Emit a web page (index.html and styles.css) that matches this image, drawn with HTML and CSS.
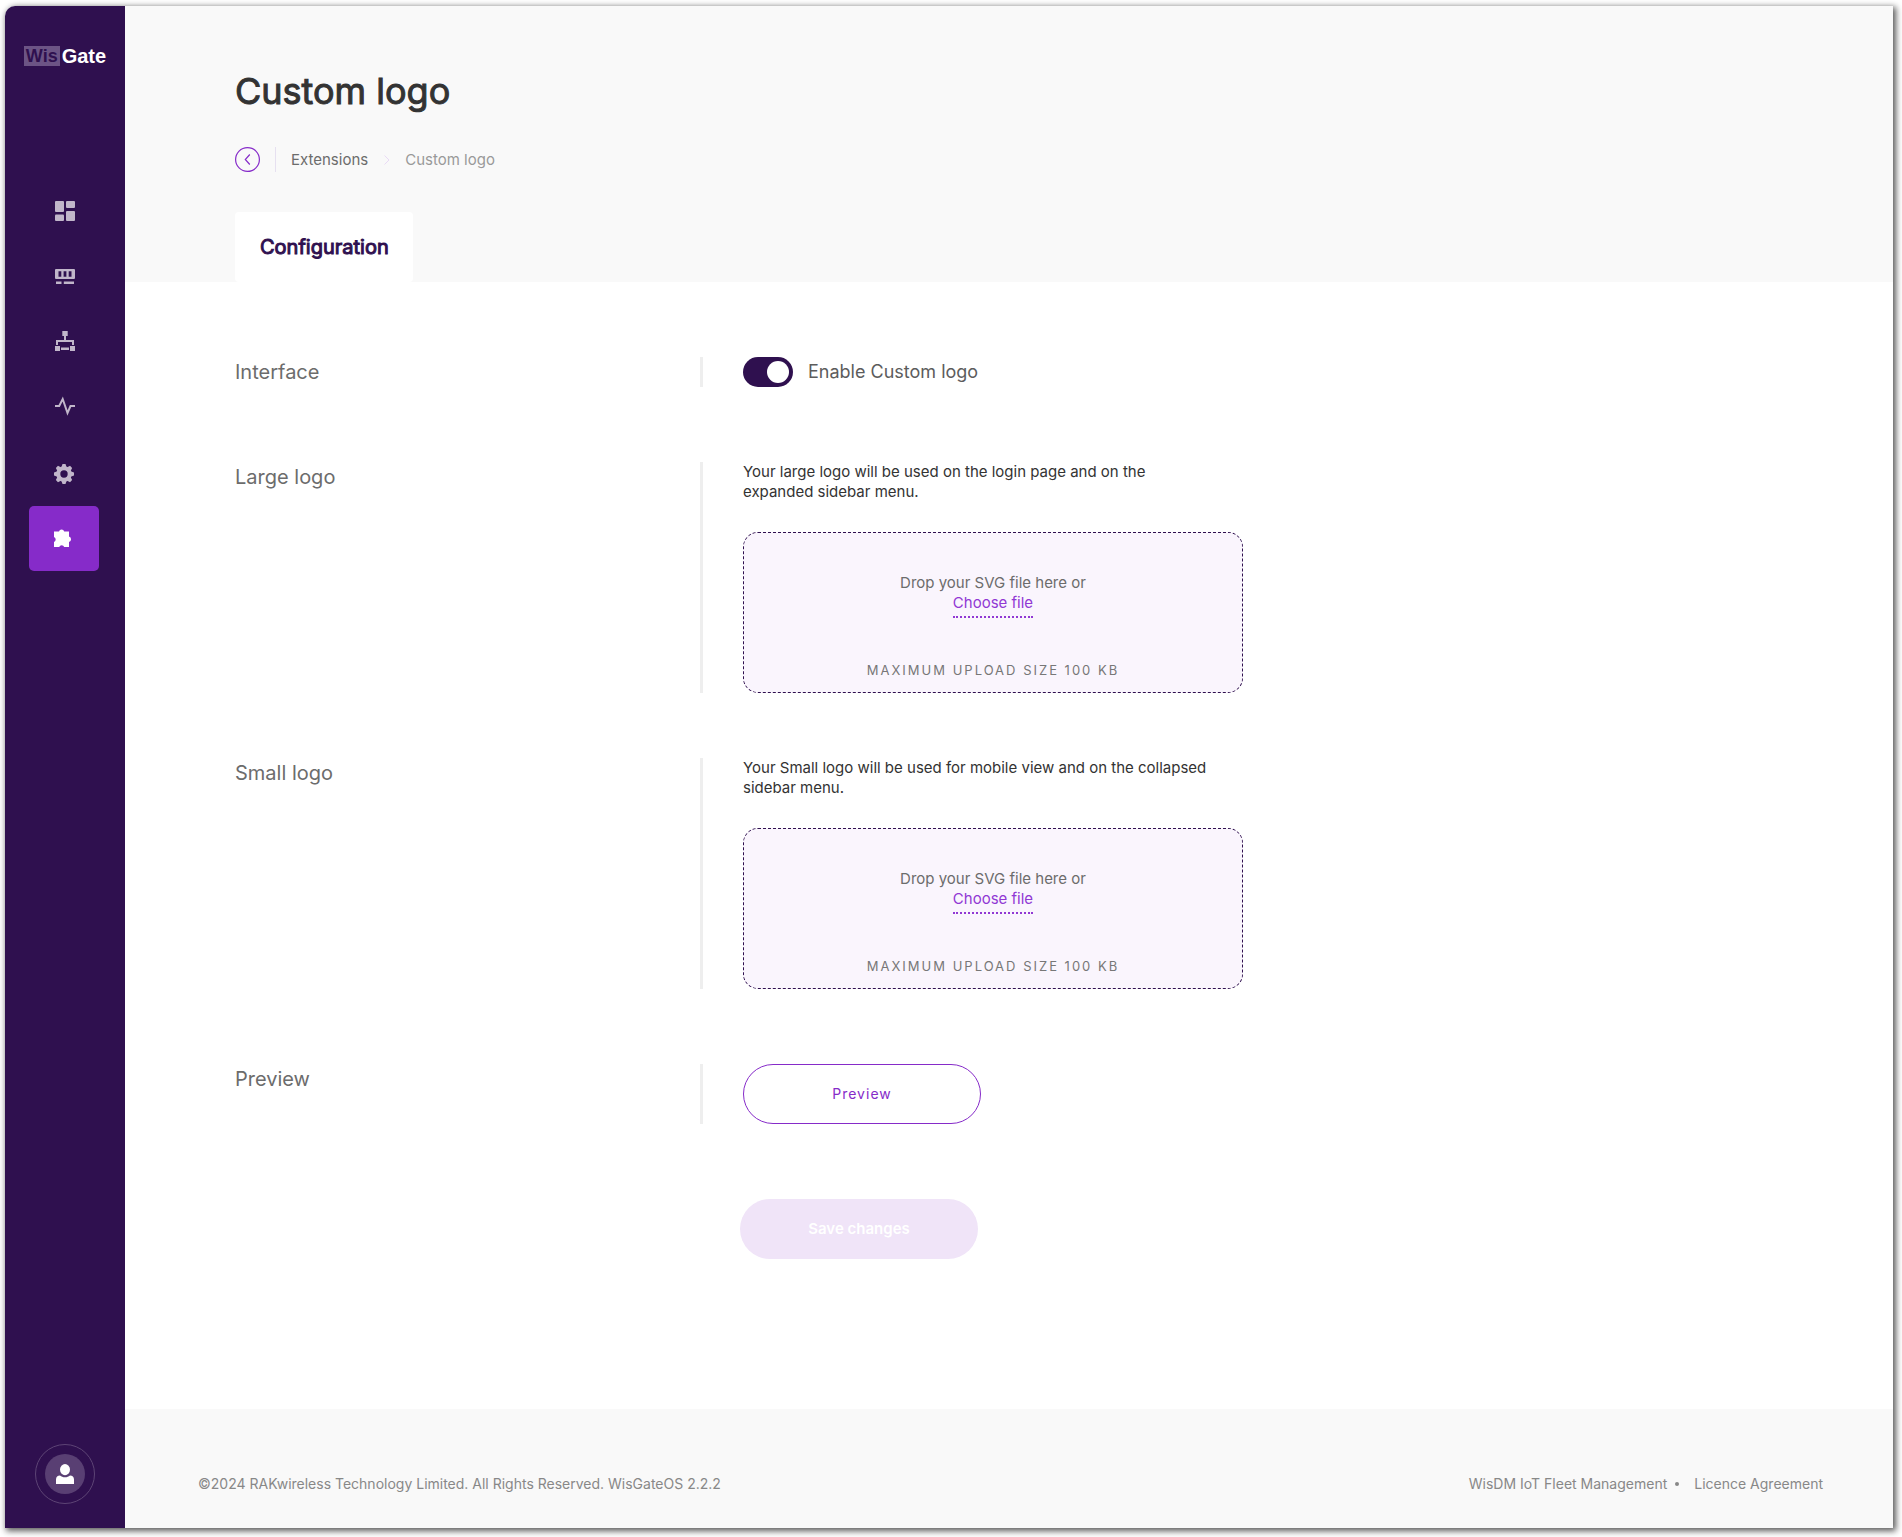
FILE: index.html
```html
<!DOCTYPE html>
<html lang="en">
<head>
<meta charset="utf-8">
<title>Custom logo - WisGate</title>
<meta name="viewport" content="width=device-width, initial-scale=1">
<link rel="stylesheet" href="styles.css">
</head>
<body>
<div class="window">
  <aside class="sidebar">
    <a class="brand" href="#" aria-label="WisGate"><span class="brand-wis">Wis</span><span class="brand-gate">Gate</span></a>
    <nav class="nav" aria-label="Main">
      <a class="nav-link" href="#" aria-label="Dashboard">
        <svg class="icon" viewBox="0 0 20 20"><rect width="9" height="11" rx="1"/><rect x="11" width="9" height="7" rx="1"/><rect y="13.5" width="9" height="6.500" rx="1"/><rect x="11" y="10" width="9" height="10" rx="1"/></svg>
      </a>
      <a class="nav-link" href="#" aria-label="Gateway">
        <svg class="icon" viewBox="0 0 20 20"><path fill-rule="evenodd" d="M1 3h18a1 1 0 0 1 1 1v8a1 1 0 0 1-1 1H1a1 1 0 0 1-1-1V4a1 1 0 0 1 1-1zM3.500 5.200v5.600h2.800V5.200zM8.600 5.200v5.600h2.800V5.200zM13.700 5.200v5.600h2.800V5.200z"/><path d="M1 15.500h5.500V18H1zM8.800 15.500H19V18H8.800z"/></svg>
      </a>
      <a class="nav-link" href="#" aria-label="Network">
        <svg class="icon" viewBox="0 0 20 20"><path d="M7.300 0h5.400v5H7.300zM0 15h5v5H0zM15 15h5v5h-5zM6 16.500h8V19H6z"/><path d="M9 5h2v4h8v5h-2v-3H3v3H1V9h8z"/></svg>
      </a>
      <a class="nav-link" href="#" aria-label="Diagnostics">
        <svg class="icon" viewBox="0 0 20 20"><path class="stroke" d="M0 10h4.200L7.700 3l4.800 14 3-7H20"/></svg>
      </a>
      <a class="nav-link nav-link-narrow nav-link-settings" href="#" aria-label="Settings">
        <svg class="icon" viewBox="-10 -10 20 20"><circle class="gear-ring" r="5.700"/><path d="M-1.500-10h3l1.200 3.500h-5.400zM-1.500 10h3l1.200-3.500h-5.400zM-10-1.500v3l3.500 1.200v-5.400zM10-1.500v3L6.500 2.700v-5.400z"/><path transform="rotate(45)" d="M-1.500-10h3l1.200 3.500h-5.400zM-1.500 10h3l1.200-3.500h-5.400zM-10-1.500v3l3.500 1.200v-5.400zM10-1.500v3L6.500 2.700v-5.400z"/></svg>
      </a>
      <a class="nav-link nav-link-narrow nav-link-active" href="#" aria-label="Extensions" aria-current="page">
        <svg class="icon" viewBox="0 0 20 20"><path d="M0 2.500h5a2.700 2.700 0 0 1 5.200 0H15v5a2.800 2.800 0 0 1 0 5.400V18h-4.800a2.700 2.700 0 0 0-5 0H0v-5a2.700 2.700 0 0 0 0-5z"/></svg>
      </a>
    </nav>
    <button class="account" type="button" aria-label="Account">
      <span class="avatar"><svg class="avatar-icon" viewBox="0 0 18 20"><ellipse cx="9" cy="5.600" rx="5" ry="5.600"/><path d="M0 20v-4.500c0-2.500 1.600-4 4-4 1.400 1.200 3 1.800 5 1.800s3.600-.6 5-1.800c2.400 0 4 1.500 4 4V20z"/></svg></span>
    </button>
  </aside>
  <div class="page">
    <header class="header">
      <h1 class="title">Custom logo</h1>
      <nav class="crumbs" aria-label="Breadcrumb">
        <a class="back" href="#" aria-label="Back"><svg class="back-icon" viewBox="0 0 25 25"><circle cx="12.500" cy="12.500" r="11.900"/><path d="M14.800 7.500l-4.500 5 4.500 5"/></svg></a>
        <a class="crumb" href="#">Extensions</a>
        <svg class="crumb-arrow" viewBox="0 0 6 10"><path d="M.5.500L5 5 .5 9.500"/></svg>
        <span class="crumb-current">Custom logo</span>
      </nav>
      <a class="tab" href="#">Configuration</a>
    </header>
    <main class="form">
      <section class="row">
        <h2 class="row-label">Interface</h2>
        <div class="row-body">
          <label class="switch"><input class="switch-input" type="checkbox" role="switch" checked>Enable Custom logo</label>
        </div>
      </section>
      <section class="row">
        <h2 class="row-label">Large logo</h2>
        <div class="row-body">
          <p class="hint">Your large logo will be used on the login page and on the expanded sidebar menu.</p>
          <div class="drop">
            <span>Drop your SVG file here or</span>
            <button class="choose" type="button">Choose file</button>
            <span class="limit">Maximum upload size 100 KB</span>
          </div>
        </div>
      </section>
      <section class="row row-near">
        <h2 class="row-label">Small logo</h2>
        <div class="row-body">
          <p class="hint">Your Small logo will be used for mobile view and on the collapsed sidebar menu.</p>
          <div class="drop">
            <span>Drop your SVG file here or</span>
            <button class="choose" type="button">Choose file</button>
            <span class="limit">Maximum upload size 100 KB</span>
          </div>
        </div>
      </section>
      <section class="row">
        <h2 class="row-label">Preview</h2>
        <div class="row-body">
          <button class="btn btn-outline" type="button">Preview</button>
        </div>
      </section>
      <div class="actions">
        <button class="btn btn-save" type="submit" disabled>Save changes</button>
      </div>
    </main>
    <footer class="footer">
      <span>©2024 RAKwireless Technology Limited. All Rights Reserved. WisGateOS 2.2.2</span>
      <div class="footer-links"><a href="#">WisDM IoT Fleet Management</a><span class="dot"></span><a href="#">Licence Agreement</a></div>
    </footer>
  </div>
</div>
</body>
</html>
```
FILE: styles.css
```css
* { box-sizing: border-box; }

body {
  margin: 0;
  padding: 6px 9px 9px 5px;
  min-height: 100vh;
  display: flex;
  background: #fff;
  font-family: Inter, "Liberation Sans", sans-serif;
  font-size: 15px;
  line-height: 20px;
  color: #333;
}

a { color: inherit; text-decoration: none; }
button { font: inherit; padding: 0; cursor: pointer; }
h1, h2, p { margin: 0; }

.window {
  flex: 1;
  display: flex;
  border-top-left-radius: 10px;
  box-shadow: 2px 2px 6px 1px rgba(0, 0, 0, .65);
}

.sidebar {
  width: 120px;
  flex: none;
  display: flex;
  flex-direction: column;
  align-items: center;
  padding: 40px 0 24px;
  border-top-left-radius: 10px;
  background: #2f104f;
}

.brand {
  display: flex;
  align-items: center;
  gap: 2px;
  height: 20px;
  font-family: "Liberation Sans", Arial, sans-serif;
  font-size: 18px;
  font-weight: 700;
}
.brand-wis { padding: 0 2px; background: #6c5485; color: #2f104f; }
.brand-gate { font-size: 20px; color: #fff; }

.nav {
  display: flex;
  flex-direction: column;
  align-items: center;
  margin-top: 112px;
}
.nav-link {
  width: 70px;
  height: 65px;
  display: flex;
  align-items: center;
  justify-content: center;
  border-radius: 5px;
}
.nav-link-narrow { margin-right: 2px; }
.nav-link-settings { margin-top: 3px; }
.nav-link-active { background: #862bc9; }
.icon { width: 20px; height: 20px; fill: #c1b6ca; }
.nav-link-active .icon { fill: #fff; }
.stroke { fill: none; stroke: #c1b6ca; stroke-width: 2; }
.gear-ring { fill: none; stroke: #c1b6ca; stroke-width: 4; }

.account {
  width: 60px;
  height: 60px;
  margin-top: auto;
  display: flex;
  align-items: center;
  justify-content: center;
  border: 1px solid #5d4475;
  border-radius: 50%;
  background: none;
}
.avatar {
  width: 40px;
  height: 40px;
  display: flex;
  align-items: center;
  justify-content: center;
  border-radius: 50%;
  background: #593f73;
}
.avatar-icon { width: 18px; height: 20px; fill: #fff; }

.page {
  flex: 1;
  min-width: 0;
  display: flex;
  flex-direction: column;
  background: #fff;
}

.header {
  display: flex;
  flex-direction: column;
  align-items: flex-start;
  padding: 61px 110px 0;
  background: #f9f9f9;
}
.title {
  font-size: 36px;
  line-height: 48px;
  font-weight: 400;
  -webkit-text-stroke: 1px currentColor;
}
.crumbs {
  display: flex;
  align-items: center;
  height: 25px;
  margin: 32px 0 40px;
}
.back {
  display: flex;
  padding-right: 15px;
  margin-right: 15px;
  border-right: 1px solid #e6e0f0;
}
.back-icon { width: 25px; height: 25px; fill: none; stroke: #862bc9; stroke-width: 1.2; }
.crumb { color: #6c6c6c; }
.crumb-arrow { width: 6px; height: 10px; margin: 0 15px 0 16px; fill: none; stroke: #e9daf5; }
.crumb-current { color: #999; }
.tab {
  padding: 20px 24px 20px 25px;
  border-radius: 4px;
  background: #fff;
  color: #2f104f;
  font-size: 20px;
  line-height: 30px;
  -webkit-text-stroke: 1px currentColor;
}

.form { flex: 1; padding: 75px 110px; }
.row { display: flex; margin-bottom: 75px; }
.row-near { margin-top: -10px; }
.row-label {
  width: 465px;
  flex: none;
  font-size: 20px;
  line-height: 30px;
  font-weight: 400;
  color: #6c6c6c;
}
.row-body {
  width: 543px;
  padding-left: 40px;
  border-left: 3px solid #eee;
}
.hint { width: 470px; margin-bottom: 30px; }

.switch {
  display: flex;
  align-items: center;
  gap: 15px;
  height: 30px;
  font-size: 18px;
  color: #5c5c5c;
}
.switch-input {
  appearance: none;
  width: 50px;
  height: 30px;
  margin: 0;
  padding: 4px;
  display: flex;
  justify-content: flex-end;
  border-radius: 15px;
  background: #2f104f;
}
.switch-input::before {
  content: "";
  width: 22px;
  height: 22px;
  border-radius: 50%;
  background: #fff;
}

.drop {
  height: 161px;
  display: flex;
  flex-direction: column;
  align-items: center;
  padding-top: 40px;
  border: 1px dashed #2f104f;
  border-radius: 15px;
  background: #faf5fd;
  color: #6c6c6c;
}
.choose {
  height: 25px;
  padding-bottom: 3px;
  border: 0;
  border-bottom: 2px dotted #9138d4;
  background: none;
  color: #9138d4;
}
.limit {
  margin-top: 42px;
  font-size: 13px;
  letter-spacing: 2px;
  text-transform: uppercase;
  color: #777;
}

.btn {
  width: 238px;
  height: 60px;
  border: 0;
  border-radius: 30px;
}
.btn-outline {
  display: block;
  border: 1px solid #862bc9;
  background: #fff;
  color: #862bc9;
  font-size: 14px;
  letter-spacing: 1px;
}
.btn-save { background: #f0e4f8; color: #fff; font-weight: 600; }
.actions { padding-left: 505px; }

.footer {
  display: flex;
  justify-content: space-between;
  padding: 65px 70px 34px 73px;
  background: #f9f9f9;
  font-size: 14px;
  color: #888;
}
.footer-links { display: flex; align-items: center; }
.dot { width: 4px; height: 4px; margin: 0 15px 0 8px; border-radius: 50%; background: #888; }
```
